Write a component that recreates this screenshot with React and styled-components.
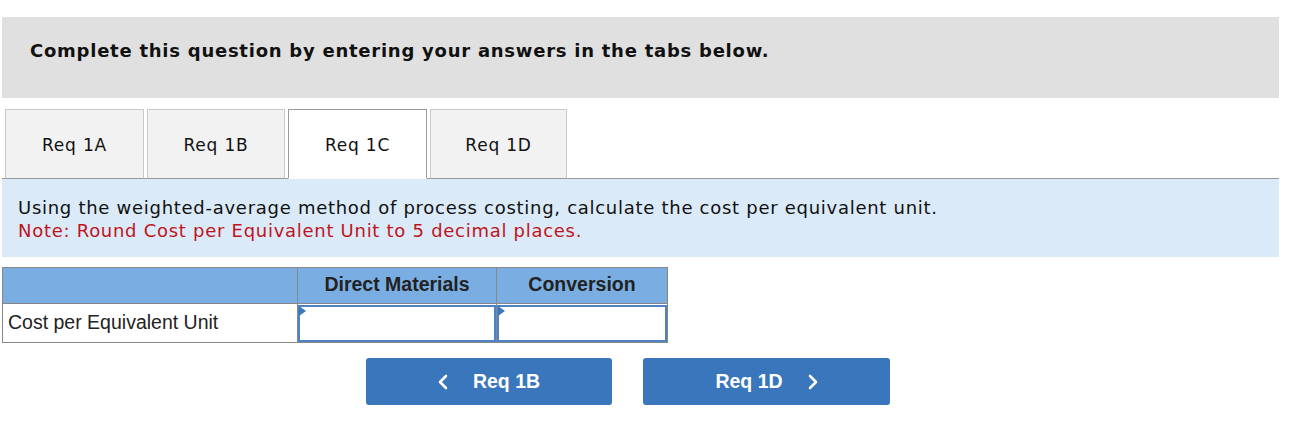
import React from "react";
import styled, { createGlobalStyle } from "styled-components";

const Global = createGlobalStyle`
  html, body { margin: 0; padding: 0; background: #fff; }
  body { font-family: "DejaVu Sans", Verdana, sans-serif; }
`;

const Page = styled.div`
  width: 1277px;
  padding: 17px 0 0 2px;
`;

const Banner = styled.div`
  height: 81px;
  box-sizing: border-box;
  background: #e0e0e0;
  padding: 21px 0 0 28px;
  font-family: "DejaVu Sans", Verdana, sans-serif;
  font-weight: bold;
  font-size: 18px;
  letter-spacing: 0.75px;
  line-height: 25px;
  color: #111;
`;

const TabRow = styled.div`
  display: flex;
  gap: 3px;
  margin-top: 11px;
  padding-left: 3px;
  border-bottom: 1px solid #999;
`;

const Tab = styled.div`
  width: ${(p) => p.$w}px;
  height: 70px;
  box-sizing: border-box;
  margin-bottom: -1px;
  display: flex;
  align-items: center;
  justify-content: center;
  font-family: "DejaVu Sans", Verdana, sans-serif;
  font-size: 17px;
  letter-spacing: 0.8px;
  color: #111;
  background: ${(p) => (p.$active ? "#fff" : "#f2f2f2")};
  border: 1px solid ${(p) => (p.$active ? "#999" : "#c8c8c8")};
  border-bottom: 1px solid ${(p) => (p.$active ? "#fff" : "#999")};
  padding-top: 2px;
`;

const Prompt = styled.div`
  background: #daeaf8;
  height: 78px;
  box-sizing: border-box;
  padding: 17px 0 0 16px;
  font-family: "DejaVu Sans", Verdana, sans-serif;
  font-size: 18px;
  letter-spacing: 0.72px;
  line-height: 23px;
  color: #111;
`;

const Note = styled.div`
  color: #c0141b;
`;

const Table = styled.table`
  margin-top: 10px;
  border-collapse: collapse;
  font-family: "Liberation Sans", Arial, sans-serif;
  color: #222;
`;

const HeadCell = styled.th`
  width: ${(p) => p.$w}px;
  height: 36px;
  box-sizing: border-box;
  padding: 0 0 2px 0;
  background: #7aaee3;
  border: 1px solid #888;
  font-size: 19.5px;
  font-weight: bold;
  text-align: center;
  vertical-align: middle;
`;

const LabelCell = styled.td`
  height: 39px;
  box-sizing: border-box;
  border: 1px solid #888;
  padding: 0 0 1px 5px;
  font-size: 19.5px;
  vertical-align: middle;
`;

const InputCell = styled.td`
  height: 39px;
  box-sizing: border-box;
  border: 1px solid #888;
  padding: 0;
`;

const InputBox = styled.div`
  position: relative;
  height: 37px;
  box-sizing: border-box;
  border: 2px solid #4d82c4;
  background: #fff;
`;

const Marker = styled.span`
  position: absolute;
  left: -1px;
  top: -1px;
  width: 0;
  height: 0;
  border-top: 5px solid transparent;
  border-bottom: 5px solid transparent;
  border-left: 7px solid #3a77bc;
`;

const Nav = styled.div`
  display: flex;
  gap: 31px;
  margin-top: 15px;
  padding-left: 364px;
`;

const NavButton = styled.button`
  width: ${(p) => p.$w}px;
  height: 47px;
  border: none;
  border-radius: 3px;
  background: #3a76bb;
  color: #fff;
  display: flex;
  align-items: center;
  justify-content: center;
  gap: 25px;
  font-family: "Liberation Sans", Arial, sans-serif;
  font-weight: bold;
  font-size: 19.5px;
  padding: 0;
  cursor: pointer;
`;

const Chevron = ({ dir }) => (
  <svg width="10" height="16" viewBox="0 0 10 16">
    <polyline
      points={dir === "left" ? "8,2 2,8 8,14" : "2,2 8,8 2,14"}
      fill="none"
      stroke="#fff"
      strokeWidth="2.6"
      strokeLinecap="round"
      strokeLinejoin="round"
    />
  </svg>
);

const tabs = [
  { label: "Req 1A", w: 139 },
  { label: "Req 1B", w: 138 },
  { label: "Req 1C", w: 139, active: true },
  { label: "Req 1D", w: 137 },
];

export default function App() {
  return (
    <Page>
      <Global />
      <Banner>Complete this question by entering your answers in the tabs below.</Banner>
      <TabRow>
        {tabs.map((t) => (
          <Tab key={t.label} $w={t.w} $active={t.active}>
            {t.label}
          </Tab>
        ))}
      </TabRow>
      <Prompt>
        <div>Using the weighted-average method of process costing, calculate the cost per equivalent unit.</div>
        <Note>Note: Round Cost per Equivalent Unit to 5 decimal places.</Note>
      </Prompt>
      <Table>
        <thead>
          <tr>
            <HeadCell $w={295} />
            <HeadCell $w={199}>Direct Materials</HeadCell>
            <HeadCell $w={171}>Conversion</HeadCell>
          </tr>
        </thead>
        <tbody>
          <tr>
            <LabelCell>Cost per Equivalent Unit</LabelCell>
            <InputCell>
              <InputBox>
                <Marker />
              </InputBox>
            </InputCell>
            <InputCell>
              <InputBox>
                <Marker />
              </InputBox>
            </InputCell>
          </tr>
        </tbody>
      </Table>
      <Nav>
        <NavButton $w={246}>
          <Chevron dir="left" />
          <span>Req 1B</span>
        </NavButton>
        <NavButton $w={247}>
          <span>Req 1D</span>
          <Chevron dir="right" />
        </NavButton>
      </Nav>
    </Page>
  );
}
